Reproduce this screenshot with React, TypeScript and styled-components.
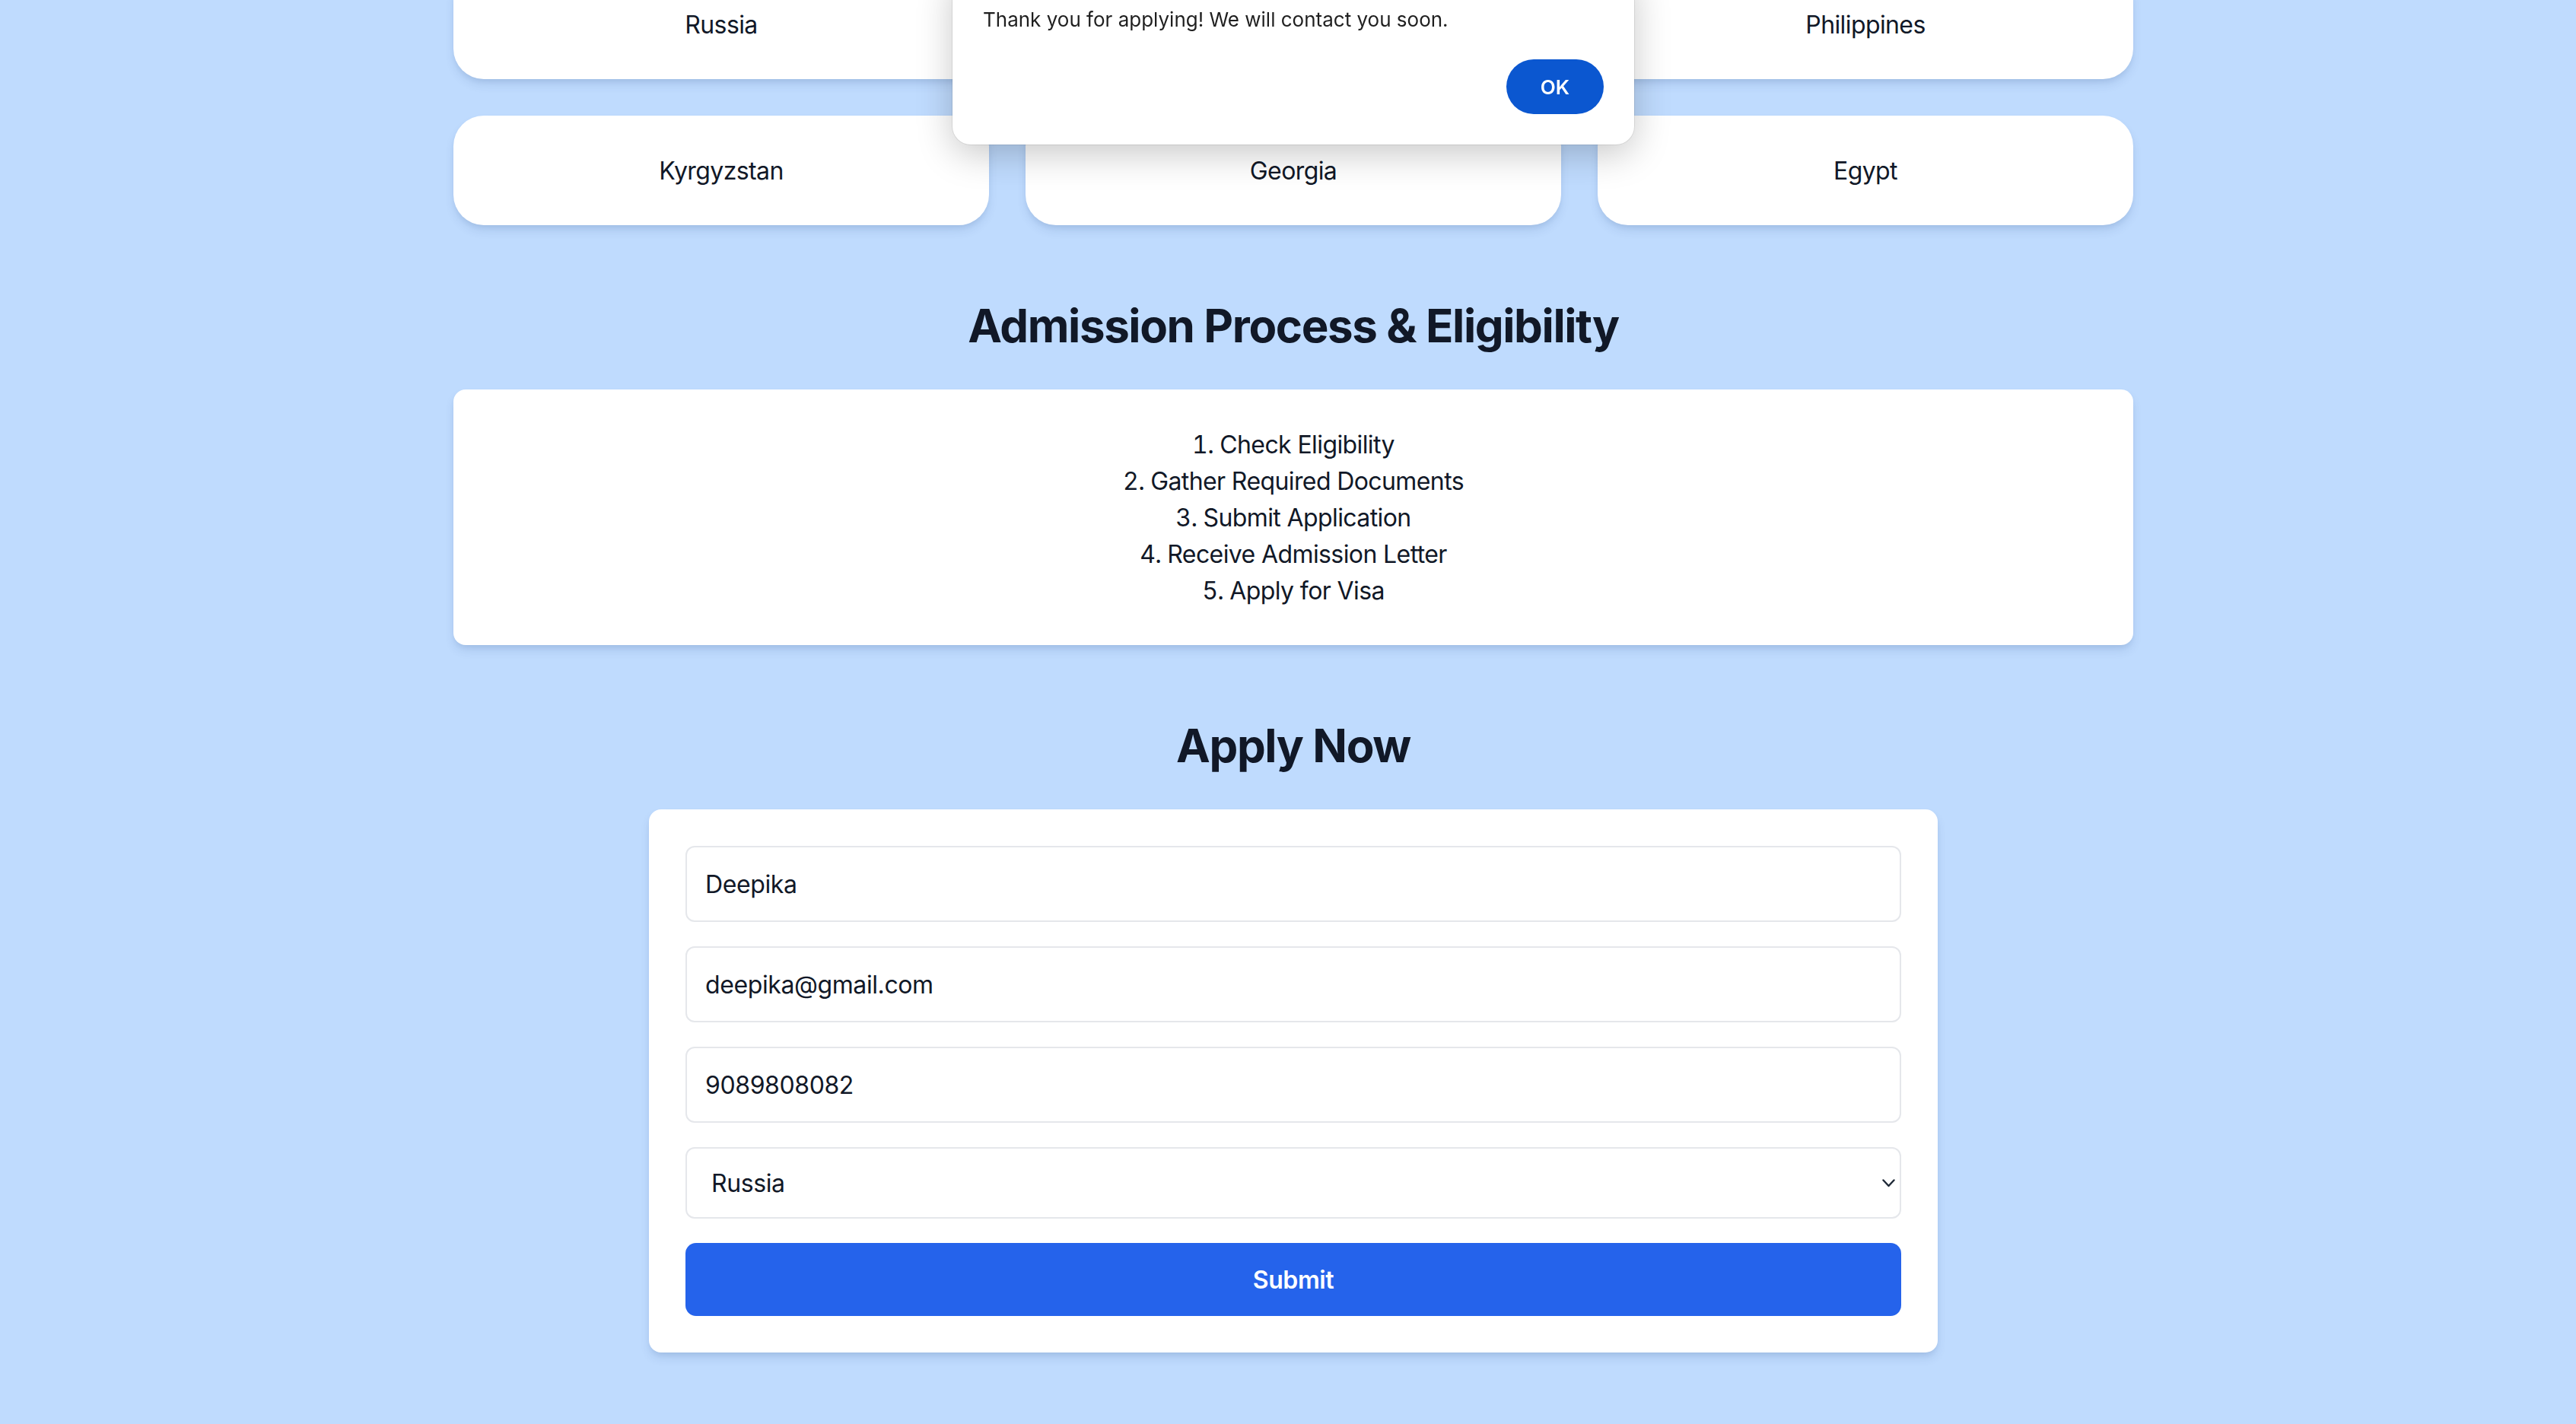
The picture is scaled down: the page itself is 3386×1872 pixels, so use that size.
import styled, { createGlobalStyle } from 'styled-components';

const GlobalStyle = createGlobalStyle`
  html, body {
    margin: 0;
    padding: 0;
    background: #bfdbfe;
    font-family: Inter, "Noto Sans", "Liberation Sans", sans-serif;
    color: #111827;
  }
  * {
    box-sizing: border-box;
  }
`;

const Page = styled.main`
  min-height: 1872px;
  padding-left: 14px;
  overflow: hidden;
  display: flex;
  flex-direction: column;
  align-items: center;
`;

const Container = styled.div`
  width: 2208px;
  display: flex;
  flex-direction: column;
  align-items: center;
`;

const CountryGrid = styled.div`
  width: 100%;
  margin-top: -40px;
  display: grid;
  grid-template-columns: repeat(3, 1fr);
  gap: 48px;
`;

const CountryCard = styled.div`
  height: 144px;
  background: #ffffff;
  border-radius: 40px;
  box-shadow: 0 8px 14px -2px rgba(30, 64, 120, 0.14), 0 4px 8px -4px rgba(30, 64, 120, 0.12);
  display: flex;
  align-items: center;
  justify-content: center;
  padding-top: 2px;
  font-size: 32px;
  line-height: 48px;
  letter-spacing: -0.6px;
  color: #111827;
`;

const SectionTitle = styled.h2`
  margin: 96px 0 48px;
  font-size: 60px;
  line-height: 72px;
  font-weight: 700;
  letter-spacing: -1.4px;
  color: #111827;
  text-align: center;
`;

const StepsBox = styled.div`
  width: 100%;
  background: #ffffff;
  border-radius: 16px;
  padding: 49px 48px 47px;
  box-shadow: 0 8px 14px -2px rgba(30, 64, 120, 0.14), 0 4px 8px -4px rgba(30, 64, 120, 0.12);
`;

const Steps = styled.ol`
  margin: 0;
  padding: 0;
  list-style: decimal inside;
  text-align: center;
  font-size: 32px;
  line-height: 48px;
  letter-spacing: -0.6px;
  color: #111827;
`;

const Form = styled.form`
  width: 1694px;
  background: #ffffff;
  border-radius: 16px;
  padding: 48px;
  display: flex;
  flex-direction: column;
  gap: 32px;
  box-shadow: 0 8px 14px -2px rgba(30, 64, 120, 0.14), 0 4px 8px -4px rgba(30, 64, 120, 0.12);
`;

const Input = styled.input`
  width: 100%;
  height: 100px;
  padding: 0 24px;
  border: 2px solid #e5e7eb;
  border-radius: 12px;
  font-family: inherit;
  font-size: 32px;
  letter-spacing: -0.4px;
  color: #111827;
  background: #ffffff;
  outline: none;
`;

const SelectWrap = styled.div`
  position: relative;
  width: 100%;
`;

const Select = styled.select`
  width: 100%;
  height: 94px;
  padding: 0 32px;
  border: 2px solid #e5e7eb;
  border-radius: 12px;
  font-family: inherit;
  font-size: 32px;
  letter-spacing: -0.4px;
  color: #111827;
  background: #ffffff;
  appearance: none;
  outline: none;
`;

const Chevron = styled.svg`
  position: absolute;
  right: 8px;
  top: 42px;
  pointer-events: none;
`;

const SubmitButton = styled.button`
  width: 100%;
  height: 96px;
  border: none;
  border-radius: 14px;
  background: #2563eb;
  color: #ffffff;
  font-family: inherit;
  font-size: 32px;
  font-weight: 600;
  letter-spacing: -0.4px;
  cursor: pointer;
`;

const AlertDialog = styled.div`
  position: fixed;
  top: -40px;
  left: calc(50% + 7px);
  transform: translateX(-50%);
  width: 896px;
  padding: 50px 40px 40px;
  background: #ffffff;
  border-radius: 24px;
  box-shadow: 0 0 0 1px rgba(0, 0, 0, 0.08), 0 12px 48px rgba(0, 0, 0, 0.22);
  display: flex;
  flex-direction: column;
`;

const AlertMessage = styled.p`
  margin: 0;
  font-size: 26px;
  line-height: 32px;
  color: #1f1f1f;
`;

const AlertActions = styled.div`
  margin-top: 36px;
  display: flex;
  justify-content: flex-end;
`;

const OkButton = styled.button`
  width: 128px;
  height: 72px;
  border: none;
  border-radius: 36px;
  background: #0b57d0;
  color: #ffffff;
  font-family: inherit;
  font-size: 26px;
  font-weight: 600;
`;

// the middle card of the first row sits under the alert, so it shows no label
const cards = ['Russia', '', 'Philippines', 'Kyrgyzstan', 'Georgia', 'Egypt'];

const countries = ['Russia', 'Ukraine', 'Philippines', 'Kyrgyzstan', 'Georgia', 'Egypt'];

const steps = [
  'Check Eligibility',
  'Gather Required Documents',
  'Submit Application',
  'Receive Admission Letter',
  'Apply for Visa',
];

const App = () => {
  return (
    <>
      <GlobalStyle />
      <Page>
        <Container>
          <CountryGrid>
            {cards.map((c, i) => (
              <CountryCard key={i}>{c}</CountryCard>
            ))}
          </CountryGrid>

          <SectionTitle>Admission Process &amp; Eligibility</SectionTitle>
          <StepsBox>
            <Steps>
              {steps.map((s) => (
                <li key={s}>{s}</li>
              ))}
            </Steps>
          </StepsBox>

          <SectionTitle>Apply Now</SectionTitle>
          <Form onSubmit={(e) => e.preventDefault()}>
            <Input type="text" defaultValue="Deepika" placeholder="Full Name" />
            <Input type="email" defaultValue="deepika@gmail.com" placeholder="Email" />
            <Input type="tel" defaultValue="9089808082" placeholder="Phone" />
            <SelectWrap>
              <Select defaultValue="Russia">
                {countries.map((c) => (
                  <option key={c} value={c}>
                    {c}
                  </option>
                ))}
              </Select>
              <Chevron width="17" height="11" viewBox="0 0 17 11" fill="none">
                <path d="M1.5 1.5 L8.5 9 L15.5 1.5" stroke="#1f2937" strokeWidth="2.4" strokeLinecap="round" strokeLinejoin="round" />
              </Chevron>
            </SelectWrap>
            <SubmitButton type="submit">Submit</SubmitButton>
          </Form>
        </Container>
      </Page>

      <AlertDialog role="alertdialog">
        <AlertMessage>Thank you for applying! We will contact you soon.</AlertMessage>
        <AlertActions>
          <OkButton>OK</OkButton>
        </AlertActions>
      </AlertDialog>
    </>
  );
};

export default App;
